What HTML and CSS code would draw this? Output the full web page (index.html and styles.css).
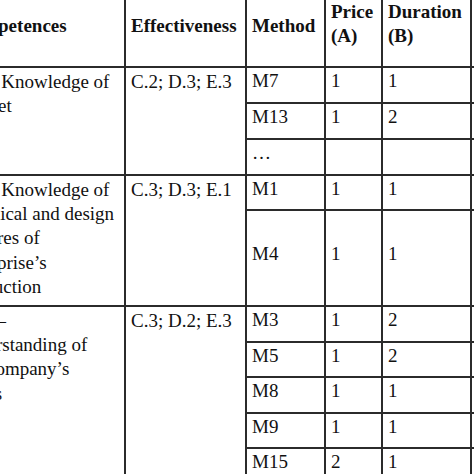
FILE: index.html
```html
<!DOCTYPE html>
<html>
<head>
<meta charset="utf-8">
<link rel="stylesheet" href="styles.css">
</head>
<body>
<div class="grid">
  <div class="cell head">Competences</div>
  <div class="cell head">Effectiveness</div>
  <div class="cell head">Method</div>
  <div class="cell head two">Price<br>(A)</div>
  <div class="cell head two">Duration<br>(B)</div>
  <div class="cell head">Total</div>

  <div class="cell top span3">K1 – Knowledge of<br>market</div>
  <div class="cell top span3">C.2; D.3; E.3</div>
  <div class="cell">M7</div><div class="cell">1</div><div class="cell">1</div><div class="cell"></div>
  <div class="cell">M13</div><div class="cell">1</div><div class="cell">2</div><div class="cell"></div>
  <div class="cell">…</div><div class="cell"></div><div class="cell"></div><div class="cell"></div>

  <div class="cell top span2">K2 – Knowledge of<br>technical and design<br>features of<br>enterprise’s<br>production</div>
  <div class="cell top span2">C.3; D.3; E.1</div>
  <div class="cell">M1</div><div class="cell">1</div><div class="cell">1</div><div class="cell"></div>
  <div class="cell">M4</div><div class="cell">1</div><div class="cell">1</div><div class="cell"></div>

  <div class="cell top span6">K13 –<br>understanding of<br>the company’s<br>needs</div>
  <div class="cell top span6">C.3; D.2; E.3</div>
  <div class="cell">M3</div><div class="cell">1</div><div class="cell">2</div><div class="cell"></div>
  <div class="cell">M5</div><div class="cell">1</div><div class="cell">2</div><div class="cell"></div>
  <div class="cell">M8</div><div class="cell">1</div><div class="cell">1</div><div class="cell"></div>
  <div class="cell">M9</div><div class="cell">1</div><div class="cell">1</div><div class="cell"></div>
  <div class="cell">M15</div><div class="cell">2</div><div class="cell">1</div><div class="cell"></div>
  <div class="cell">M16</div><div class="cell">1</div><div class="cell">1</div><div class="cell"></div>
</div>
</body>
</html>
```
FILE: styles.css
```css
html, body {
  margin: 0;
  padding: 0;
  background: #ffffff;
  overflow: hidden;
  width: 474px;
  height: 474px;
}

.grid {
  display: grid;
  grid-template-columns: 172px 121px 79px 57px 89px 80px;
  grid-template-rows: 78px 36px 36px 36px 35px 96px 36px 35px 36px 35px 36px 36px;
  width: max-content;
  margin-left: -48px;
  margin-top: -12px;
  border-left: 2px solid #2b2b2b;
  border-top: 2px solid #2b2b2b;
  font-family: "Liberation Serif", "Times New Roman", serif;
  font-size: 19px;
  color: #111111;
}

.cell {
  box-sizing: border-box;
  display: flex;
  align-items: center;
  border-right: 2px solid #2b2b2b;
  border-bottom: 2px solid #2b2b2b;
  padding: 1px 5px 8px 5px;
  line-height: 24.4px;
  white-space: nowrap;
  overflow: hidden;
}

.head {
  font-weight: bold;
  line-height: 24.4px;
  padding-bottom: 5px;
}

.head.two {
  padding-bottom: 9px;
}

.top {
  align-items: flex-start;
  padding-top: 1.5px;
}

.span2 { grid-row: span 2; }
.span3 { grid-row: span 3; }
.span6 { grid-row: span 6; }
```
